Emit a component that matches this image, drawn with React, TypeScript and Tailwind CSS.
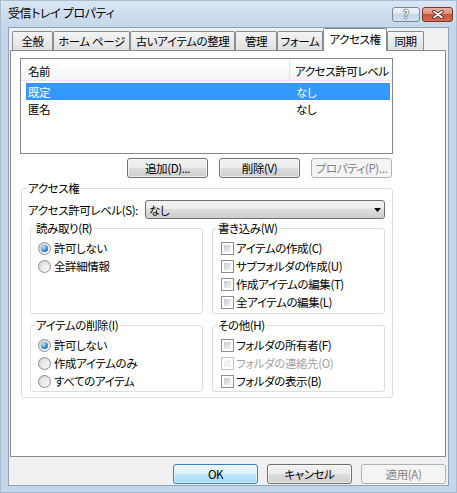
import React from "react";

type BtnProps = {
  label: string;
  w: string;
  kind?: "normal" | "default" | "disabled";
};

// Win7 style push button
function Btn({ label, w, kind = "normal" }: BtnProps) {
  if (kind === "disabled") {
    return (
      <div className={`${w} h-[20px] rounded-[3px] border border-[#adb2b5] bg-[#f4f4f4] text-[#838383] flex items-center justify-center`}>
        {label}
      </div>
    );
  }
  if (kind === "default") {
    return (
      <div className={`${w} h-[20px] rounded-[3px] border border-[#3c7fb1] bg-[linear-gradient(#eaf6fd_0%,#d9f0fc_50%,#bee6fd_50%,#a7d9f5_100%)] shadow-[inset_0_0_0_1px_#ffffff80] flex items-center justify-center`}>
        {label}
      </div>
    );
  }
  return (
    <div className={`${w} h-[20px] rounded-[3px] border border-[#707070] bg-[linear-gradient(#f2f2f2_0%,#ebebeb_50%,#dddddd_50%,#cfcfcf_100%)] shadow-[inset_0_0_0_1px_#ffffffa0] flex items-center justify-center`}>
      {label}
    </div>
  );
}

function Radio({ label, checked }: { label: string; checked?: boolean }) {
  return (
    <div className="h-[18px] flex items-center">
      <span className="w-[13px] h-[13px] shrink-0 rounded-full border border-[#8e8f8f] bg-[linear-gradient(135deg,#cfd1d3,#fbfbfb)] flex items-center justify-center">
        {checked ? (
          <span className="w-[7px] h-[7px] rounded-full bg-[radial-gradient(circle_at_35%_30%,#c4e6ff_0%,#3a8ad0_55%,#1b4e86_100%)]" />
        ) : (
          <span className="w-[7px] h-[7px] rounded-full bg-[linear-gradient(135deg,#e2e3e4,#f7f7f7)]" />
        )}
      </span>
      <span className="ml-[3px]">{label}</span>
    </div>
  );
}

function Check({ label, disabled }: { label: string; disabled?: boolean }) {
  return (
    <div className="h-[18px] flex items-center">
      <span
        className={
          disabled
            ? "w-[13px] h-[13px] shrink-0 border border-[#c5c5c5] bg-white p-[2px]"
            : "w-[13px] h-[13px] shrink-0 border border-[#8e8f8f] bg-white p-[2px]"
        }
      >
        <span
          className={
            disabled
              ? "block w-full h-full bg-[#f1f1f1]"
              : "block w-full h-full bg-[linear-gradient(135deg,#c6cacf,#f4f4f5)]"
          }
        />
      </span>
      <span className={disabled ? "ml-[2px] text-[#a3a3a3]" : "ml-[2px]"}>{label}</span>
    </div>
  );
}

function Group({ title, className, children }: { title: string; className: string; children: React.ReactNode }) {
  return (
    <fieldset className={`border border-[#d5dfe5] rounded-[3px] ${className}`}>
      <legend className="ml-[4px] px-[1px] leading-[14px]">{title}</legend>
      {children}
    </fieldset>
  );
}

const TABS = [
  { label: "全般", w: "w-[41px]" },
  { label: "ホーム ページ", w: "w-[77px]" },
  { label: "古いアイテムの整理", w: "w-[105px]" },
  { label: "管理", w: "w-[42px]" },
  { label: "フォーム", w: "w-[46px]" },
];

export default function App() {
  return (
    <div className="w-[457px] h-[493px] flex flex-col bg-[#c4d6ea] border border-[#a9bcd2] font-['Noto_Sans_CJK_JP',sans-serif] [font-feature-settings:'palt'] text-[11.5px] tracking-[-0.4px] leading-[14px] whitespace-nowrap text-black select-none">
      {/* title bar */}
      <div className="h-[26px] flex items-center pl-[7px] pr-[3px] pb-[2px] bg-[linear-gradient(#d9e6f3,#c4d6ea)]">
        <span className="text-[12px]">受信トレイ プロパティ</span>
        <div className="ml-auto flex gap-[2px] pt-[2px]">
          <div className="w-[28px] h-[15px] rounded-[3px] border border-[#7489a3] bg-[linear-gradient(#f2f6fa_0%,#dce6f0_50%,#c7d5e4_50%,#d3e0ee_100%)] flex items-center justify-center">
            <span className="text-[12px] font-bold leading-none text-white [text-shadow:0_0_1px_#2c3e55,0_0_1px_#2c3e55,0_0_1px_#2c3e55]">?</span>
          </div>
          <div className="w-[31px] h-[15px] rounded-[3px] border border-[#7a3428] bg-[linear-gradient(#eab3a6_0%,#dc8b76_50%,#c8553a_50%,#d56e50_100%)] flex items-center justify-center">
            <svg width="12" height="9" viewBox="0 0 12 9">
              <path d="M2 1.5 L10 7.5 M10 1.5 L2 7.5" stroke="#4a1a12" strokeWidth="3.4" strokeLinecap="round" />
              <path d="M2 1.5 L10 7.5 M10 1.5 L2 7.5" stroke="#ffffff" strokeWidth="1.8" strokeLinecap="round" />
            </svg>
          </div>
        </div>
      </div>

      {/* client area */}
      <div className="mx-[7px] mb-[6px] flex-1 flex flex-col bg-[#f0f0f0] border border-[#8ea3bb]">
        <div className="ml-[1px] w-[436px]">
          {/* tabs */}
          <div className="h-[22px] flex items-end pl-[2px]">
            {TABS.map((t) => (
              <div
                key={t.label}
                className={`${t.w} h-[19px] border-l border-t border-r border-[#898c95] rounded-t-[2px] bg-[linear-gradient(#f5f5f5,#e0e0e0)] flex items-center justify-center`}
              >
                {t.label}
              </div>
            ))}
            <div className="w-[64px] h-[23px] -mb-px relative z-10 border-l border-t border-r border-[#898c95] rounded-t-[2px] bg-white flex items-center justify-center pb-[3px]">
              アクセス権
            </div>
            <div className="w-[37px] h-[19px] border-l border-t border-r border-[#898c95] rounded-t-[2px] bg-[linear-gradient(#f5f5f5,#e0e0e0)] flex items-center justify-center">
              同期
            </div>
          </div>

          {/* tab panel */}
          <div className="h-[407px] border border-[#898c95] bg-white">
            {/* list view */}
            <div className="ml-[9px] mt-[7px] w-[373px] h-[96px] border border-[#828790] bg-white">
              <div className="h-[22px] flex bg-[linear-gradient(#ffffff,#f3f4f6)] border-b border-[#e3e5e8]">
                <div className="w-[269px] pl-[7px] pt-[2px] flex items-center border-r border-[#e3e5e8]">名前</div>
                <div className="pl-[5px] pt-[2px] flex items-center">アクセス許可レベル</div>
              </div>
              <div className="mt-[2px] ml-[5px] w-[364px]">
                <div className="h-[17px] flex items-center bg-[#3399ff] text-white">
                  <span className="w-[270px] pl-[2px]">既定</span>
                  <span>なし</span>
                </div>
                <div className="h-[17px] flex items-center">
                  <span className="w-[270px] pl-[2px]">匿名</span>
                  <span>なし</span>
                </div>
              </div>
            </div>

            <div className="ml-[9px] w-[373px] mt-[4px] pr-[1px] flex justify-end gap-[11px]">
              <Btn label="追加(D)..." w="w-[81px]" />
              <Btn label="削除(V)" w="w-[81px]" />
              <Btn label="プロパティ(P)..." w="w-[81px]" kind="disabled" />
            </div>

            {/* permissions group */}
            <fieldset className="ml-[10px] mt-[3px] w-[371px] border border-[#d5dfe5] rounded-[3px]">
              <legend className="ml-[5px] px-[1px] leading-[14px]">アクセス権</legend>
              <div className="pt-[5px] pr-[7px] pb-[5px]">
                <div className="flex items-center pl-[6px]">
                  <span>アクセス許可レベル(S):</span>
                  <div className="ml-auto w-[240px] h-[19px] rounded-[3px] border border-[#707070] bg-[linear-gradient(#f2f2f2_0%,#ebebeb_50%,#dddddd_50%,#cfcfcf_100%)] flex items-center pl-[3px] pr-[3px]">
                    <span>なし</span>
                    <svg className="ml-auto" width="7" height="4" viewBox="0 0 7 4">
                      <path d="M0 0 H7 L3.5 4 Z" fill="#000" />
                    </svg>
                  </div>
                </div>

                <div className="mt-[2px] pl-[8px] flex gap-[9px]">
                  <Group title="読み取り(R)" className="w-[173px] h-[93px]">
                    <div className="pt-[4px] pl-[7px]">
                      <Radio label="許可しない" checked />
                      <Radio label="全詳細情報" />
                    </div>
                  </Group>
                  <Group title="書き込み(W)" className="w-[173px] h-[93px]">
                    <div className="pt-[4px] pl-[8px]">
                      <Check label="アイテムの作成(C)" />
                      <Check label="サブフォルダの作成(U)" />
                      <Check label="作成アイテムの編集(T)" />
                      <Check label="全アイテムの編集(L)" />
                    </div>
                  </Group>
                </div>

                <div className="mt-[4px] pl-[8px] flex gap-[9px]">
                  <Group title="アイテムの削除(I)" className="w-[173px] h-[74px]">
                    <div className="pt-[4px] pl-[7px]">
                      <Radio label="許可しない" checked />
                      <Radio label="作成アイテムのみ" />
                      <Radio label="すべてのアイテム" />
                    </div>
                  </Group>
                  <Group title="その他(H)" className="w-[173px] h-[74px]">
                    <div className="pt-[4px] pl-[8px]">
                      <Check label="フォルダの所有者(F)" />
                      <Check label="フォルダの連絡先(O)" disabled />
                      <Check label="フォルダの表示(B)" />
                    </div>
                  </Group>
                </div>
              </div>
            </fieldset>
          </div>
        </div>

        {/* dialog buttons */}
        <div className="mt-[7px] pr-[2px] flex justify-end gap-[9px]">
          <Btn label="OK" w="w-[85px]" kind="default" />
          <Btn label="キャンセル" w="w-[85px]" />
          <Btn label="適用(A)" w="w-[85px]" kind="disabled" />
        </div>
      </div>
    </div>
  );
}
